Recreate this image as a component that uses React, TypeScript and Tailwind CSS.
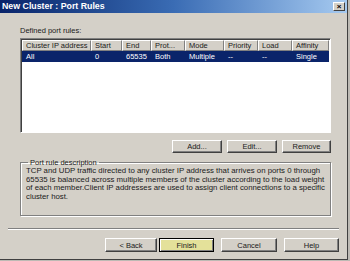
import React from 'react';

const cols = [
  { label: 'Cluster IP address', w: 'w-[69px]', value: 'All' },
  { label: 'Start', w: 'w-[31px]', value: '0' },
  { label: 'End', w: 'w-[29px]', value: '65535' },
  { label: 'Prot...', w: 'w-[34px]', value: 'Both' },
  { label: 'Mode', w: 'w-[39px]', value: 'Multiple' },
  { label: 'Priority', w: 'w-[34px]', value: '--' },
  { label: 'Load', w: 'w-[34px]', value: '--' },
  { label: 'Affinity', w: 'w-[37px]', value: 'Single' },
];

function Btn({ label, className = '' }: { label: string; className?: string }) {
  return (
    <div
      className={`flex items-center justify-center bg-[#d4d0c8] border border-t-white border-l-white border-r-[#404040] border-b-[#404040] shadow-[inset_-1px_-1px_0_#808080] ${className}`}
    >
      {label}
    </div>
  );
}

export default function App() {
  return (
    <div
      className="w-[350px] h-[261px] bg-[#bdbab4] overflow-hidden text-[7.5px] leading-[9px] text-[#1a1a1a]"
      style={{ fontFamily: '"Liberation Sans", Arial, sans-serif' }}
    >
      <div className="w-[348px] h-[260px] bg-[#d4d0c8] border-r border-b border-[#404040] flex flex-col">
        {/* Title bar */}
        <div className="h-[13px] flex items-center justify-between bg-gradient-to-r from-[#0a246a] via-[#3a6cb4] to-[#a6caf0] pl-[2px] pr-[2px]">
          <span className="text-white font-bold text-[8.8px]">New Cluster : Port Rules</span>
          <div className="w-[12px] h-[9px] flex items-center justify-center bg-[#d4d0c8] border border-t-white border-l-white border-r-[#404040] border-b-[#404040] text-[8px] leading-none font-bold text-black">
            ×
          </div>
        </div>

        <div className="px-[20px] pr-[16px] flex flex-col">
          <div className="mt-[13px] h-[9px]">Defined port rules:</div>

          {/* List view */}
          <div className="mt-[3px] h-[95px] bg-white border border-t-[#808080] border-l-[#808080] border-r-white border-b-white shadow-[inset_1px_1px_0_#404040] pl-[1px] pt-[1px]">
            <div className="flex h-[11px]">
              {cols.map((c) => (
                <div
                  key={c.label}
                  className={`${c.w} shrink-0 bg-[#d4d0c8] border border-t-white border-l-white border-r-[#808080] border-b-[#808080] pl-[3px] flex items-center whitespace-nowrap overflow-hidden`}
                >
                  {c.label}
                </div>
              ))}
            </div>
            <div className="flex h-[11px] bg-[#0a246a] text-white w-[307px]">
              {cols.map((c) => (
                <div key={c.label} className={`${c.w} shrink-0 pl-[4px] flex items-center whitespace-nowrap`}>
                  {c.value}
                </div>
              ))}
            </div>
          </div>

          {/* Add / Edit / Remove */}
          <div className="mt-[7px] flex justify-end gap-[5px] h-[13px]">
            <Btn label="Add..." className="w-[50px]" />
            <Btn label="Edit..." className="w-[50px]" />
            <Btn label="Remove" className="w-[49px]" />
          </div>

          {/* Description group */}
          <fieldset className="mt-[5px] h-[58px] min-w-0 border border-[#808080] shadow-[1px_1px_0_white,inset_1px_1px_0_white] px-[5px]">
            <legend className="ml-[2px] px-[2px] leading-[9px]">Port rule description</legend>
            <div className="text-[7.8px] leading-[8.5px] whitespace-nowrap">
              <div>TCP and UDP traffic directed to any cluster IP address that arrives on ports 0 through</div>
              <div>65535 is balanced across multiple members of the cluster according to the load weight</div>
              <div>of each member.Client IP addresses are used to assign client connections to a specific</div>
              <div>cluster host.</div>
            </div>
          </fieldset>
        </div>

        {/* Separator */}
        <div className="mt-[12px] mx-[8px] h-[2px] border-t border-t-[#808080] border-b border-b-white" />

        {/* Wizard buttons */}
        <div className="mt-[8px] flex h-[14px] pl-[105px]">
          <Btn label="< Back" className="w-[52px]" />
          <div className="ml-[2px] w-[55px] flex items-center justify-center bg-[#e4e19a] border border-black shadow-[inset_1px_1px_0_white,inset_-1px_-1px_0_#808080]">
            Finish
          </div>
          <Btn label="Cancel" className="ml-[7px] w-[56px]" />
          <Btn label="Help" className="ml-[7px] w-[55px]" />
        </div>
      </div>
    </div>
  );
}
